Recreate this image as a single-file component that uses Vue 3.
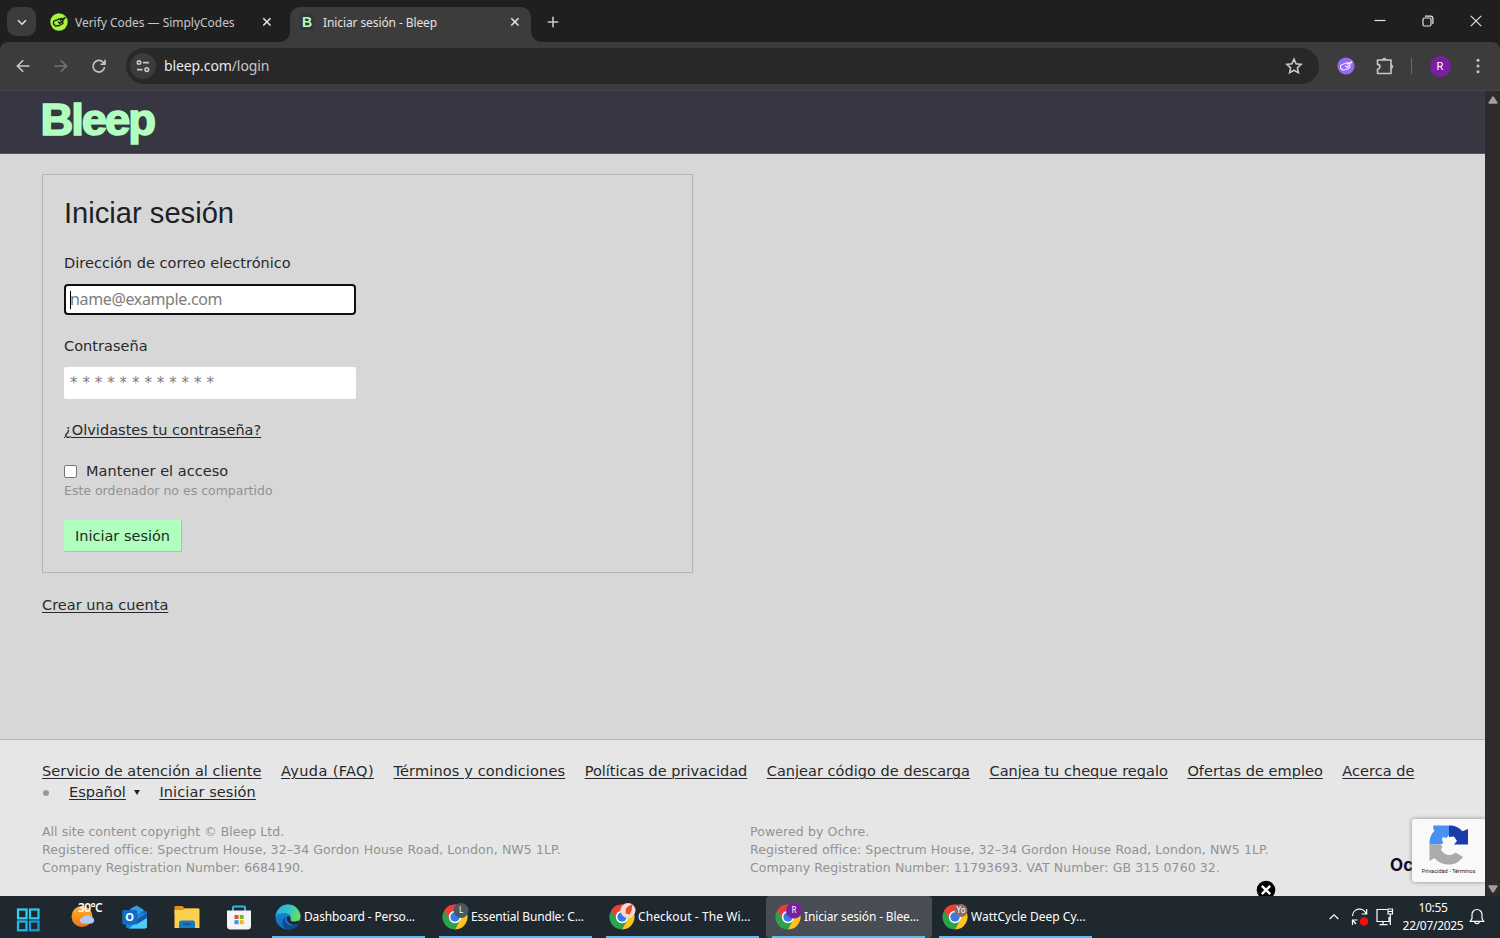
<template>
  <div class="screen">
    <!-- tab strip -->
    <header class="tabstrip">
      <button class="tab-search">
        <svg width="12" height="12" viewBox="0 0 12 12"><path d="M2 4.200 6 8.200l4-4" class="ln bright mid" /></svg>
      </button>
      <div class="tab">
        <svg class="favicon" width="18" height="18" viewBox="0 0 18 18">
          <circle cx="9" cy="9" r="8.7" fill="#a6f53c" />
          <path :d="simplyPath" fill="none" stroke="#202b16" stroke-width="1.4" stroke-linejoin="round" />
        </svg>
        <span class="tab-title first">Verify Codes — SimplyCodes</span>
        <svg class="close" width="10" height="10" viewBox="0 0 10 10"><path d="M1.3 1.3l7.2 7.2M8.5 1.3L1.3 8.5" class="ln bright mid" /></svg>
      </div>
      <div class="tab active">
        <span class="favicon-b">B</span>
        <span class="tab-title second">Iniciar sesión - Bleep</span>
        <svg class="close" width="10" height="10" viewBox="0 0 10 10"><path d="M1.3 1.3l7.2 7.2M8.5 1.3L1.3 8.5" class="ln bright mid" /></svg>
      </div>
      <svg class="new-tab" width="12" height="12" viewBox="0 0 12 12"><path d="M6 .7v10.6M.7 6h10.6" class="ln mid" /></svg>
      <div class="window-buttons">
        <svg width="12" height="12" viewBox="0 0 12 12"><path d="M.5 5.5h11" class="ln bright" /></svg>
        <svg width="12" height="12" viewBox="0 0 12 12">
          <rect x="1" y="3" width="8" height="8" rx="1.5" class="ln bright" />
          <path d="M3 1.2h5.5a2.4 2.4 0 0 1 2.4 2.4V9" class="ln bright" />
        </svg>
        <svg width="12" height="12" viewBox="0 0 12 12"><path d="M.8.8l10.4 10.4M11.2.8L.8 11.2" class="ln bright" /></svg>
      </div>
    </header>

    <!-- toolbar -->
    <div class="toolbar">
      <svg class="nav" width="16" height="16" viewBox="0 0 16 16"><path d="M14.500 8H2.500M8.200 2.200 2.400 8l5.800 5.800" class="ln mid" /></svg>
      <svg class="nav dim" width="16" height="16" viewBox="0 0 16 16"><path d="M1.500 8h12M7.800 2.200 13.600 8l-5.800 5.800" class="ln mid" /></svg>
      <svg class="nav" width="16" height="16" viewBox="0 0 16 16"><path d="M13.600 9.200A5.800 5.800 0 1 1 12 4.100l1.700 1.800M14 1.700v4.500H9.500" class="ln mid" /></svg>
      <div class="omnibox">
        <span class="site-info">
          <svg width="14" height="14" viewBox="0 0 14 14">
            <circle cx="3" cy="3.6" r="1.7" class="ln mid" /><path d="M7 3.6h6M1 10.6h5.5" class="ln mid" />
            <circle cx="10.8" cy="10.6" r="1.8" class="ln mid" />
          </svg>
        </span>
        <span class="url">bleep.com<i>/login</i></span>
        <svg class="star" width="18" height="18" viewBox="0 0 18 18"><path d="M9 2.2l2.1 4.6 5 .6-3.7 3.4 1 4.9L9 13.2l-4.4 2.5 1-4.9L1.9 7.4l5-.6z" class="ln mid" /></svg>
      </div>
      <svg class="ext" width="18" height="18" viewBox="0 0 18 18">
        <circle cx="9" cy="9" r="8.6" fill="#9469f6" />
        <path :d="simplyPath" fill="none" stroke="#efe8ff" stroke-width="1.1" stroke-linejoin="round" />
      </svg>
      <svg class="puzzle" width="20" height="20" viewBox="0 0 20 20">
        <path d="M2.500 4h13.500v13.500H2.500v-4.300a2.400 2.400 0 0 0 0-4.800z" class="ln mid" stroke-linejoin="round" />
        <path d="M7.500 4a1.800 1.800 0 0 1 3.600 0M16 8.800a1.800 1.800 0 0 1 0 3.600" fill="#c7c7c7" stroke="#c7c7c7" />
      </svg>
      <span class="divider"></span>
      <span class="avatar">R</span>
      <svg class="menu" width="4" height="16" viewBox="0 0 4 16" fill="#c7c7c7">
        <circle cx="2" cy="2.3" r="1.5" /><circle cx="2" cy="8" r="1.5" /><circle cx="2" cy="13.7" r="1.5" />
      </svg>
    </div>

    <!-- page -->
    <div class="viewport">
      <div class="page">
        <div class="site-header">
          <svg width="124" height="54" viewBox="0 0 124 54">
            <text x="-1.500" y="36.500" textLength="113.500" lengthAdjust="spacingAndGlyphs" class="logo">Bleep</text>
          </svg>
        </div>
        <main>
          <form class="login" @submit.prevent>
            <h1>Iniciar sesión</h1>
            <label>Dirección de correo electrónico</label>
            <div class="field focused"><span class="caret"></span>name@example.com</div>
            <label>Contraseña</label>
            <div class="field stars">************</div>
            <a class="forgot">¿Olvidastes tu contraseña?</a>
            <div class="keep"><span class="box"></span>Mantener el acceso</div>
            <small>Este ordenador no es compartido</small>
            <button class="submit">Iniciar sesión</button>
          </form>
          <a class="create">Crear una cuenta</a>
        </main>
        <footer>
          <nav class="links">
            <a v-for="l in links" :key="l">{{ l }}</a>
          </nav>
          <div class="links second-row">
            <span class="bullet"></span><a>Español</a><span class="tri"></span><a>Iniciar sesión</a>
          </div>
          <div class="legal">
            <p><span v-for="t in bleepLegal" :key="t">{{ t }}</span></p>
            <p><span v-for="t in ochreLegal" :key="t">{{ t }}</span></p>
          </div>
          <b class="ochre">Oc</b>
          <div class="recaptcha">
            <svg width="40" height="40" viewBox="0 0 40 40">
              <path d="M4.500.5H20V10l-2.500 3-4-1-.5 3 1.500 3-3 1.500H.5C.5 13 2 9 5.500 6L4 3z" fill="#4a90f2" />
              <path d="M20 .5c6 0 10 2 13.500 5.800L39 4v15.500H25l3-3.500-3-4.500-5 .5z" fill="#1c3aa9" />
              <path d="M.5 19.500h11l2 2.500-1.500 2.500c2 4 5 5.500 9 5.500 2 0 4-1 5.500-2.500l7.500 4.500c-4 5-8 7.500-14 7.500-6.500 0-11-2.500-14.500-6.500L.5 36z" fill="#ababab" />
            </svg>
            <span>Privacidad - Términos</span>
          </div>
          <svg class="dismiss" width="20" height="16" viewBox="0 0 20 16">
            <circle cx="10" cy="10" r="9.300" fill="#000" />
            <path d="M5.800 5.800l8.400 8.400M14.200 5.800l-8.400 8.400" stroke="#fff" stroke-width="2.400" />
          </svg>
        </footer>
      </div>
      <div class="scrollbar">
        <svg width="10" height="8" viewBox="0 0 10 8"><path d="M4.200.7Q5 0 5.800.7L9.500 6.500Q9.600 7.700 8.800 7.700H1.200Q.4 7.700.5 6.500z" fill="#a0a0a0" /></svg>
        <svg width="10" height="8" viewBox="0 0 10 8"><path d="M4.200 7.300Q5 8 5.800 7.300L9.500 1.500Q9.600.3 8.800.3H1.200Q.4.3.5 1.500z" fill="#a0a0a0" /></svg>
      </div>
    </div>

    <!-- taskbar -->
    <div class="taskbar">
      <svg class="t-start" width="24" height="24" viewBox="0 0 24 24" fill="none" stroke="#22b8e8" stroke-width="2.200">
        <rect x="2" y="1.500" width="8.500" height="8.800" stroke="#2dd4ec" /><rect x="14" y="1.500" width="8.500" height="8.800" stroke="#26caec" />
        <rect x="2" y="13.500" width="8.500" height="8.800" /><rect x="14" y="13.500" width="8.500" height="8.800" stroke="#1a9ce0" />
      </svg>
      <div class="weather">
        <svg width="26" height="24" viewBox="0 0 26 24">
          <defs><linearGradient id="sun" x2="0" y2="1"><stop stop-color="#ffb52e" /><stop offset="1" stop-color="#ed7417" /></linearGradient></defs>
          <circle cx="11" cy="11.500" r="10.500" fill="url(#sun)" />
          <path d="M12 18.500a3 3 0 0 1 0-6 5 5 0 0 1 8.500-.5 3.400 3.400 0 0 1 .5 6.500z" fill="#b3caf7" />
        </svg>
        <span>30°C</span>
      </div>
      <svg class="t-outlook" width="26" height="24" viewBox="0 0 26 24">
        <path d="M4 7 14.500.5 25 7v4H4z" fill="#1967b8" /><path d="M8 4l6.500-3.500L22 5l-8 7z" fill="#2f9de8" />
        <path d="M4 10l21-2v13q0 2.500-2.500 2.500H7Q4 23.500 4 21z" fill="#1b82d6" /><path d="M25 8v13q0 2.500-2.500 2.500H7z" fill="#50cdf3" />
        <path d="M25 8v5L15 19l-4-2z" fill="#1859a5" />
        <rect x=".3" y="5" width="15" height="14.500" rx="1.500" fill="#0f6cc7" />
        <text x="7.700" y="16" text-anchor="middle" class="glyph bold" font-size="11">O</text>
      </svg>
      <svg class="t-folder" width="26" height="24" viewBox="0 0 26 24">
        <path d="M.5 2q0-1 1-1h7l2 2.500h14v6H.5z" fill="#d9961b" /><path d="M.5 5H9l2-1.500h13.500q1 0 1 1V23H.5z" fill="#fccf50" />
        <path d="M5 23v-5q0-2.500 2.500-2.500h11q2.500 0 2.500 2.500v5z" fill="#1779c4" /><path d="M9 19h8" stroke="#0c5490" stroke-width="1.500" />
      </svg>
      <svg class="t-store" width="26" height="25" viewBox="0 0 26 25">
        <path d="M7 6V2.500q0-1 1-1h10q1 0 1 1V6" fill="none" stroke="#36b3e8" stroke-width="2" />
        <path d="M1 5.500h24V21q0 3.500-3.500 3.500h-17Q1 24.500 1 21z" fill="#f4f4f6" />
        <path d="M8.500 10h4v4h-4z" fill="#e84f2c" /><path d="M13.700 10h4v4h-4z" fill="#7cb51c" />
        <path d="M8.500 15.200h4v4h-4z" fill="#1ba1e8" /><path d="M13.700 15.200h4v4h-4z" fill="#f8b512" />
      </svg>
      <div v-for="a in apps" :key="a.title" class="app" :class="[a.cls, { current: a.current }]">
        <svg v-if="a.edge" width="26" height="26" viewBox="0 0 26 26">
          <defs>
            <linearGradient id="edge" x1="0" y1="0" x2="1" y2=".2"><stop stop-color="#28a8e4" /><stop offset=".6" stop-color="#35c6c9" /><stop offset="1" stop-color="#66df55" /></linearGradient>
            <linearGradient id="edgeb" x2="0" y2="1"><stop stop-color="#1b8fdd" /><stop offset="1" stop-color="#1668bd" /></linearGradient>
          </defs>
          <circle cx="13" cy="13" r="12.500" fill="url(#edgeb)" />
          <path d="M.6 12A12.500 12.500 0 0 1 25.500 12c0 4-3 6-6.500 6-3 0-4.500-1-3.500-2.500C17 13 15 9 10 9 6 9 2 10 .6 12z" fill="url(#edge)" />
          <path d="M11 12c-3 5 1 10 7 9.500 3 0 5-1 6-2-2 4-6 6-10 6C7 25 5 17 11 12z" fill="#114a8b" />
          <path d="M12 12.500c2-1 4 .5 3.500 3-.5 2 4 3 8 1l1 2.500c-2 2-9 3-12-2-.8-1.500-1-3-.5-4.500z" fill="#20282e" />
        </svg>
        <svg v-else width="27" height="27" viewBox="0 0 27 27">
          <path d="M13 14 2.170 7.750A12.500 12.500 0 0 1 23.830 7.750z" fill="#e94235" />
          <path d="M13 14 2.170 7.750A12.500 12.500 0 0 0 13 26.500L18 17z" fill="#2ba24c" />
          <path d="M13 14 23.830 7.750A12.500 12.500 0 0 1 13 26.500L18 17z" fill="#fcc31e" />
          <path d="M13 8.200h11A12.500 12.500 0 0 0 2.170 7.750L8 17z" fill="#e94235" />
          <circle cx="13" cy="14" r="6.200" fill="#fff" /><circle cx="13" cy="14" r="4.700" fill="#347be5" />
          <circle cx="19" cy="7.500" :r="a.r" :fill="a.badge" />
          <text v-if="a.letter" x="19" y="10.300" text-anchor="middle" class="glyph" font-size="8">{{ a.letter }}</text>
          <path v-else d="M19 3.500l4.500-2.500-1 7-2 3.500-4-1 .5-5z" fill="#e35023" />
        </svg>
        <span>{{ a.title }}</span>
      </div>
      <div class="tray">
        <svg class="t-up" width="10" height="8" viewBox="0 0 10 8"><path d="M.7 6 5 1.800 9.300 6" class="ln white" /></svg>
        <svg class="t-sync" width="18" height="18" viewBox="0 0 18 18">
          <path d="M1.500 8A7 7 0 0 1 15 5.500M15.700 1v5h-5M1.500 17v-5h5M1.500 12l3.500 4" class="ln white" />
          <circle cx="13" cy="13.500" r="4.300" fill="#f50d0d" />
        </svg>
        <svg class="t-net" width="18" height="18" viewBox="0 0 18 18"><path d="M11 1.500H1v12h12V9M7 13.500v3M3.500 16.700h8M12 1h4.500v5H12zM14.300 6v11M12 3.500h4.500" class="ln white" /></svg>
        <div class="clock"><span>10:55</span><span>22/07/2025</span></div>
        <svg class="t-bell" width="16" height="18" viewBox="0 0 16 18"><path d="M1.300 13.300 3 10.500V6.500a5 5 0 0 1 10 0v4l1.700 2.800zM5.800 13.500a2.200 2.200 0 0 0 4.400 0" class="ln white" /></svg>
      </div>
    </div>
  </div>
</template>

<script setup>
// hand-with-tag mark shared by the favicon and the extension button
const simplyPath = 'M3.700 8.200 8.500 6.300 11.500 5.500 10.500 7.200 15 4.500 12.500 8 13 10.500 9.500 12.500 5.500 13 3.500 11zM8.300 8.500l1.500 2 2.200-2.300'

const links = [
  'Servicio de atención al cliente',
  'Ayuda (FAQ)',
  'Términos y condiciones',
  'Políticas de privacidad',
  'Canjear código de descarga',
  'Canjea tu cheque regalo',
  'Ofertas de empleo',
  'Acerca de'
]

const bleepLegal = [
  'All site content copyright © Bleep Ltd.',
  'Registered office: Spectrum House, 32–34 Gordon House Road, London, NW5 1LP.',
  'Company Registration Number: 6684190.'
]
const ochreLegal = [
  'Powered by Ochre.',
  'Registered office: Spectrum House, 32–34 Gordon House Road, London, NW5 1LP.',
  'Company Registration Number: 11793693. VAT Number: GB 315 0760 32.'
]

const apps = [
  { title: 'Dashboard - Perso...', edge: true, cls: 'a1' },
  { title: 'Essential Bundle: C...', letter: 'L', badge: '#455a64', r: 7.5, cls: 'a2' },
  { title: 'Checkout - The Wi...', badge: '#f6d9d3', r: 7.5, cls: 'a3' },
  { title: 'Iniciar sesión - Blee...', letter: 'R', badge: '#7b1fa2', r: 8, current: true, cls: 'a4' },
  { title: 'WattCycle Deep Cy...', letter: 'Yo', badge: '#8d6e63', r: 6.5, cls: 'a5' }
]
</script>

<style>
body {
  margin: 0;
  overflow: hidden;
}
</style>

<style scoped>
* {
  box-sizing: border-box;
}

.screen {
  width: 1500px;
  height: 938px;
  display: flex;
  flex-direction: column;
  background: #1f1f1f;
  font-family: "Noto Sans", "Open Sans", sans-serif;
  font-size: 12px;
  color: #e3e3e3;
}

svg {
  display: block;
  flex: none;
}

.ln {
  fill: none;
  stroke: #c7c7c7;
  stroke-width: 1.2;
}
.bright { stroke: #e3e3e3; }
.white { stroke: #fff; }
.mid { stroke-width: 1.6; }

/* tab strip */
.tabstrip {
  height: 42px;
  display: flex;
  align-items: flex-start;
}
.tab-search {
  width: 29px;
  height: 29px;
  margin: 7px 7px 0;
  padding: 0;
  border: 0;
  border-radius: 9px;
  background: #3c3c3c;
  display: flex;
  align-items: center;
  justify-content: center;
}
.tab {
  width: 247px;
  height: 35px;
  margin-top: 7px;
  padding: 0 18px 6px 7px;
  display: flex;
  align-items: center;
  color: #c7c7c7;
}
.tab .close {
  margin-left: auto;
}
.tab-title {
  margin-left: 8px;
  padding-top: 1px;
  white-space: nowrap;
}
.tab-title.first {
  margin-left: 7px;
  letter-spacing: -0.03px;
}
.tab-title.second {
  margin-left: 9px;
  letter-spacing: -0.1px;
}
.tab.active {
  position: relative;
  width: 241px;
  padding: 0 11px 6px 10px;
  background: #3c3c3c;
  border-radius: 10px 10px 0 0;
  color: #e3e3e3;
}
.tab.active::before,
.tab.active::after {
  content: "";
  position: absolute;
  bottom: 0;
  width: 10px;
  height: 10px;
}
.tab.active::before {
  left: -10px;
  background: radial-gradient(circle at 0 0, transparent 9.5px, #3c3c3c 10px);
}
.tab.active::after {
  right: -10px;
  background: radial-gradient(circle at 100% 0, transparent 9.5px, #3c3c3c 10px);
}
.favicon-b {
  width: 14px;
  height: 16px;
  background: #363340;
  color: #b0ffbe;
  font: 900 14px/16px "Liberation Sans", Arial, sans-serif;
  text-align: center;
}
.new-tab {
  margin: 16px 0 0 16px;
}
.window-buttons {
  margin: 15px 18px 0 auto;
  display: flex;
  gap: 36px;
}

/* toolbar */
.toolbar {
  height: 49px;
  background: #3c3c3c;
  border-bottom: 1px solid #454545;
  border-radius: 8px 8px 0 0;
  padding-left: 15px;
  display: flex;
  align-items: center;
}
.nav { margin-right: 22px; }
.nav.dim { opacity: 0.4; }
.toolbar .nav:nth-child(3) { margin-right: 19px; }
.omnibox {
  width: 1193px;
  height: 36px;
  border-radius: 18px;
  background: #282828;
  display: flex;
  align-items: center;
  padding: 0 16px 0 4px;
}
.site-info {
  width: 26px;
  height: 26px;
  border-radius: 50%;
  background: #3c3c3c;
  display: flex;
  align-items: center;
  justify-content: center;
}
.url {
  margin-left: 8px;
  padding-bottom: 1px;
  font-size: 14px;
  letter-spacing: -0.1px;
  color: #e8e8e8;
}
.url i {
  font-style: normal;
  color: #c7c7c7;
}
.star { margin-left: auto; }
.ext { margin-left: 18px; }
.puzzle { margin-left: 20px; }
.divider {
  width: 1px;
  height: 16px;
  margin-left: 16px;
  background: #6a6a6a;
}
.avatar {
  width: 21px;
  height: 21px;
  margin-left: 17.5px;
  border-radius: 50%;
  background: #7b1fa2;
  color: #fff;
  font: 11px/21px Roboto, sans-serif;
  text-align: center;
}
.menu { margin-left: 25px; }

/* page */
.viewport {
  height: 805px;
  display: flex;
}
.page {
  position: relative;
  width: 1485px;
  display: flex;
  flex-direction: column;
  overflow: hidden;
  background: #d7d7d7;
  color: #28282c;
  font: 14.5px/21px "DejaVu Sans", Verdana, sans-serif;
  letter-spacing: 0.03px;
}
.site-header {
  height: 63px;
  padding: 7px 0 0 42px;
  background: #393643;
  border-bottom: 1px solid #55525d;
}
.site-header svg {
  overflow: visible;
}
.logo {
  fill: #b0ffbe;
  stroke: #b0ffbe;
  stroke-width: 1.6px;
  font: 700 44px "Liberation Sans", Arial, sans-serif;
  letter-spacing: -2px;
}
main {
  height: 585px;
  padding: 20px 42px 0;
}
a {
  text-decoration: underline;
  text-decoration-thickness: 1px;
  text-underline-offset: 2px;
}
.login {
  width: 651px;
  height: 399px;
  border: 1px solid #b4b4b4;
  padding: 20px 21px;
  display: flex;
  flex-direction: column;
  align-items: flex-start;
}
h1 {
  margin: 0 0 22px;
  font: 400 29.15px/36px "Liberation Sans", Arial, sans-serif;
  letter-spacing: 0;
  color: #1f1f24;
}
.field {
  width: 292px;
  height: 32px;
  margin-top: 10px;
  padding: 0 6px;
  background: #fff;
  border-radius: 2px;
  color: #7d7d7d;
  font-size: 15px;
  line-height: 32px;
}
.field.focused {
  height: 31px;
  margin-bottom: 21px;
  padding: 0 4px;
  border: 2px solid #101010;
  border-radius: 4px;
  font: 16px/27px "Noto Sans", sans-serif;
  letter-spacing: -0.36px;
  display: flex;
  align-items: center;
}
.caret {
  width: 1px;
  height: 18px;
  margin-right: -1px;
  background: #000;
}
.stars {
  letter-spacing: 4.9px;
  line-height: 33px;
}
.forgot {
  margin-top: 21px;
}
.keep {
  margin-top: 20px;
  display: flex;
  align-items: center;
}
.box {
  width: 13px;
  height: 13px;
  margin-right: 9px;
  border: 1px solid #767676;
  border-radius: 2px;
  background: #fff;
}
small {
  font-size: 12.5px;
  line-height: 18px;
  letter-spacing: 0;
  color: #929292;
}
.submit {
  width: 118px;
  height: 33px;
  margin-top: 20px;
  padding: 2px 0 0;
  border: solid #a0c9a7;
  border-width: 0 1px 1px 0;
  border-radius: 1px;
  background: #b0ffbe;
  color: #1f2a24;
  font: inherit;
}
.create {
  display: inline-block;
  margin-top: 22px;
}

/* footer */
footer {
  position: relative;
  height: 157px;
  border-top: 1px solid #b4b4b4;
  background: #e6e6e6;
  padding: 21px 42px 0;
}
.links {
  display: flex;
  white-space: nowrap;
  gap: 19.5px;
}
.links a:nth-child(2) { letter-spacing: 0.38px; }
.links a:nth-child(3) { letter-spacing: 0.15px; }
.links a:nth-child(4) { letter-spacing: 0; }
.links.second-row {
  align-items: center;
  gap: 0;
}
.second-row a:nth-child(2) { letter-spacing: 0; }
.second-row a:nth-child(4) { letter-spacing: 0.1px; }
.bullet {
  width: 6px;
  height: 6px;
  margin: 0 20px 0 1px;
  border-radius: 50%;
  background: #999;
}
.tri {
  margin: 0 19.5px 0 8px;
  border: 3.5px solid transparent;
  border-top: 5px solid #222;
  border-bottom: 0;
}
.legal {
  display: grid;
  grid-template-columns: 708px 1fr;
  margin-top: 20px;
  font-size: 12.5px;
  line-height: 18px;
  letter-spacing: 0.1px;
  color: #929292;
}
.legal p {
  margin: 0;
}
.legal span {
  display: block;
}
.legal p:first-child span:first-child,
.legal p:first-child span:last-child {
  letter-spacing: 0.04px;
}
.ochre {
  position: absolute;
  left: 1390px;
  top: 114px;
  font: 700 17px/22px Inter, sans-serif;
  color: #110b2c;
}
.recaptcha {
  position: absolute;
  right: 0;
  top: 79px;
  width: 73px;
  height: 63px;
  padding-top: 6px;
  border-radius: 3px 0 0 3px;
  background: #f9f9f9;
  box-shadow: 0 0 4px #888;
  display: flex;
  flex-direction: column;
  align-items: center;
}
.recaptcha span {
  font: 5.6px/13px Roboto, sans-serif;
  letter-spacing: 0;
  color: #222;
}
.dismiss {
  position: absolute;
  left: 1256px;
  bottom: 0;
}
.scrollbar {
  width: 15px;
  padding: 5px 0 3px;
  background: #2c2c2c;
  display: flex;
  flex-direction: column;
  align-items: center;
  justify-content: space-between;
}

/* taskbar */
.taskbar {
  height: 42px;
  background: #20282f;
  display: flex;
  align-items: center;
  color: #fff;
}
.glyph {
  fill: #fff;
  font-family: "Noto Sans", sans-serif;
}
.bold { font-weight: 700; }
.t-start { margin: 6px 0 0 16px; }
.weather {
  position: relative;
  margin-left: 31px;
}
.weather span {
  position: absolute;
  left: 7px;
  top: -4px;
  font-weight: 600;
  line-height: 14px;
  letter-spacing: -0.6px;
}
.t-outlook { margin-left: 25px; }
.t-folder { margin-left: 26px; }
.t-store { margin-left: 26px; }
.app {
  position: relative;
  width: 153px;
  height: 42px;
  display: flex;
  align-items: center;
  white-space: nowrap;
}
.app::after {
  content: "";
  position: absolute;
  left: 0;
  bottom: 0;
  width: 153px;
  height: 2px;
  background: #5fbcf2;
}
.app svg { margin: -1px 0 0 3px; }
.app span {
  margin-left: 2px;
  padding-bottom: 2px;
  letter-spacing: -0.15px;
}
.a1 { margin-left: 20px; }
.a1 span { margin-left: 3px; }
.a2 { margin-left: 14px; }
.a3 { margin-left: 14px; }
.a3 span { letter-spacing: 0.08px; }
.a4 { margin-left: 7px; }
.a5 { margin-left: 7px; }
.a5 span { letter-spacing: 0.02px; }
.app.current {
  width: 166px;
  padding-left: 6px;
  background: #484d53;
  border-radius: 4px;
}
.app.current::after {
  left: 6px;
}
.tray {
  height: 42px;
  margin-left: auto;
  padding-right: 15px;
  display: flex;
  align-items: center;
}
.t-up { margin-right: 12px; }
.t-sync { margin-right: 7px; }
.t-net { margin-right: 8px; }
.clock {
  width: 62px;
  display: flex;
  flex-direction: column;
  align-items: center;
  line-height: 18px;
  letter-spacing: -0.3px;
}
.t-bell { margin-left: 5px; }
</style>
